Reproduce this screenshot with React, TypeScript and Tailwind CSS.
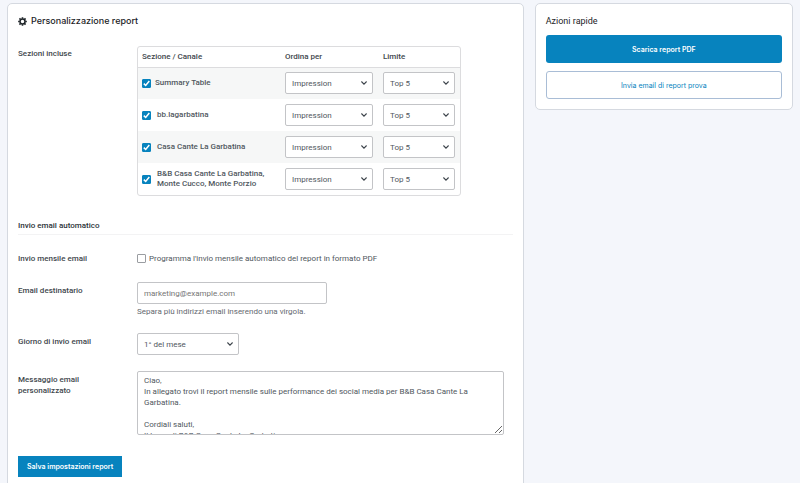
import { useState } from 'react';

interface Section {
    id: string;
    label: string;
}

const sections: Section[] = [
    { id: 'summary', label: 'Summary Table' },
    { id: 'bb-lagarbatina', label: 'bb.lagarbatina' },
    { id: 'casa-cante', label: 'Casa Cante La Garbatina' },
    { id: 'bb-casa-cante', label: 'B&B Casa Cante La Garbatina, Monte Cucco, Monte Porzio' },
];

const defaultMessage = `Ciao,
In allegato trovi il report mensile sulle performance dei social media per B&B Casa Cante La Garbatina.

Cordiali saluti,
Il team di B&B Casa Cante La Garbatina`;

function GearIcon() {
    return (
        <svg className="size-[9px] shrink-0" viewBox="0 0 20 20" fill="none" stroke="currentColor" aria-hidden="true">
            <circle cx="10" cy="10" r="5.6" strokeWidth="3.4" />
            <path
                strokeWidth="3.6"
                d="M10 .4v3.4M10 16.2v3.4M.4 10h3.4M16.2 10h3.4M3.2 3.2l2.4 2.4M14.4 14.4l2.4 2.4M3.2 16.8l2.4-2.4M14.4 5.6l2.4-2.4"
            />
        </svg>
    );
}

function Checkbox({ id, defaultChecked }: { id: string; defaultChecked?: boolean }) {
    return (
        <span className="grid size-[9px] shrink-0">
            <input
                id={id}
                type="checkbox"
                defaultChecked={defaultChecked}
                className="peer col-start-1 row-start-1 size-[9px] appearance-none rounded-[1px] border border-[#9a9da1] bg-white checked:border-[#0783be] checked:bg-[#0783be]"
            />
            <svg
                className="pointer-events-none col-start-1 row-start-1 hidden size-[9px] text-white peer-checked:block"
                viewBox="0 0 9 9"
                fill="none"
                stroke="currentColor"
                strokeWidth="1.5"
                aria-hidden="true"
            >
                <path d="M1.8 4.6l1.9 1.9L7.3 2" />
            </svg>
        </span>
    );
}

interface SelectProps {
    id?: string;
    label?: string;
    options: string[];
    className: string;
}

function Select({ id, label, options, className }: SelectProps) {
    return (
        <div className={`grid items-center ${className}`}>
            <select
                id={id}
                aria-label={label}
                className="col-start-1 row-start-1 h-[22px] w-full appearance-none rounded-[2px] border border-[#c3c4c7] bg-white px-[6px] text-[8px] text-[#50575e]"
            >
                {options.map((option) => (
                    <option key={option}>{option}</option>
                ))}
            </select>
            <svg
                className="pointer-events-none col-start-1 row-start-1 mr-[6px] h-1 w-[6px] justify-self-end text-[#3c434a]"
                viewBox="0 0 6 4"
                fill="none"
                stroke="currentColor"
                strokeWidth="1.1"
                aria-hidden="true"
            >
                <path d="M.4 .5L3 3.1L5.6 .5" />
            </svg>
        </div>
    );
}

const labelClass = 'w-[119px] shrink-0 pr-6 text-[8px] leading-[11px] font-medium text-[#41474d]';

export default function App() {
    const [message, setMessage] = useState(defaultMessage);

    return (
        <div className="min-h-screen bg-[#f4f6fb] font-['Roboto','Inter',sans-serif] text-[8px] leading-[11px] text-[#50575e]">
            <div className="grid grid-cols-[2fr_1fr] items-start gap-[11px] px-[7px] pt-[3px]">
                <main className="min-h-screen rounded-[5px] border border-[#d5d9e0] bg-white px-[10px] pt-[11px] pb-4">
                    <h1 className="flex items-center gap-1 font-['Inter',sans-serif] text-[9px] leading-3 font-medium text-[#1d2327]">
                        <GearIcon />
                        Personalizzazione report
                    </h1>

                    <div className="mt-[19px] flex items-start">
                        <h2 className={`${labelClass} pt-[2px]`}>Sezioni incluse</h2>
                        <div className="w-[324px] rounded-[3px] border border-[#dcdcde]">
                            <table className="w-full table-fixed text-left">
                                <thead>
                                    <tr className="h-5 border-b border-[#dcdcde] text-[#41474d]">
                                        <th scope="col" className="w-[142px] pl-1 font-medium">Sezione / Canale</th>
                                        <th scope="col" className="w-[98px] pl-[5px] font-medium">Ordina per</th>
                                        <th scope="col" className="pl-[5px] font-medium">Limite</th>
                                    </tr>
                                </thead>
                                <tbody>
                                    {sections.map((section, index) => (
                                        <tr key={section.id} className="h-8 odd:bg-[#f6f7f7]">
                                            <td className="pl-1">
                                                <div className={`flex items-center ${index === 0 ? 'gap-1' : 'gap-[6px]'}`}>
                                                    <Checkbox id={section.id} defaultChecked />
                                                    <label htmlFor={section.id} className="leading-[10px] font-medium">
                                                        {section.label}
                                                    </label>
                                                </div>
                                            </td>
                                            <td className="px-[5px]">
                                                <Select
                                                    label={`Ordina per: ${section.label}`}
                                                    options={['Impression', 'Engagement']}
                                                    className="w-full"
                                                />
                                            </td>
                                            <td className="px-[5px]">
                                                <Select
                                                    label={`Limite: ${section.label}`}
                                                    options={['Top 5', 'Top 10']}
                                                    className="w-full"
                                                />
                                            </td>
                                        </tr>
                                    ))}
                                </tbody>
                            </table>
                        </div>
                    </div>

                    <h2 className="mt-6 border-b border-[#f3f3f4] pb-[3px] text-[8px] leading-[11px] font-medium text-[#2c3338]">
                        Invio email automatico
                    </h2>

                    <div className="mt-[18px] flex items-center">
                        <label htmlFor="monthly" className={labelClass}>Invio mensile email</label>
                        <Checkbox id="monthly" />
                        <label htmlFor="monthly" className="pl-[3px]">
                            Programma l'invio mensile automatico del report in formato PDF
                        </label>
                    </div>

                    <div className="mt-[18px] flex items-start">
                        <label htmlFor="recipient" className={`${labelClass} pt-[3px]`}>Email destinatario</label>
                        <div>
                            <input
                                id="recipient"
                                type="email"
                                placeholder="marketing@example.com"
                                className="block h-[22px] w-[190px] rounded-[2px] border border-[#c3c4c7] px-[6px] placeholder:text-[#757575]"
                            />
                            <p className="mt-[2px] text-[#646970]">Separa più indirizzi email inserendo una virgola.</p>
                        </div>
                    </div>

                    <div className="mt-4 flex items-start">
                        <label htmlFor="day" className={`${labelClass} pt-[3px]`}>Giorno di invio email</label>
                        <Select id="day" options={['1° del mese', '15° del mese']} className="w-[102px]" />
                    </div>

                    <div className="mt-4 flex items-start">
                        <label htmlFor="message" className={`${labelClass} pt-[3px]`}>Messaggio email personalizzato</label>
                        <textarea
                            id="message"
                            value={message}
                            onChange={(e) => setMessage(e.target.value)}
                            className="block h-16 w-[367px] resize overflow-hidden rounded-[2px] border border-[#c3c4c7] px-[6px] py-[3px]"
                        />
                    </div>

                    <button type="button" className="mt-[21px] h-[21px] bg-[#0783be] px-[9px] font-['Inter',sans-serif] text-[7px] font-semibold text-white">
                        Salva impostazioni report
                    </button>
                </main>

                <aside className="rounded-[5px] border border-[#d5d9e0] bg-white px-[10px] pt-[11px] pb-[10px]">
                    <h2 className="text-[9px] leading-3 font-normal text-[#1d2327]">Azioni rapide</h2>
                    <div className="mt-2 flex flex-col gap-2 font-['Inter',sans-serif] text-[7px]">
                        <button type="button" className="h-7 rounded-[3px] bg-[#0783be] font-semibold text-white">
                            Scarica report PDF
                        </button>
                        <button type="button" className="h-7 rounded-[3px] border border-[#a9bdd6] bg-white font-normal text-[#0783be]">
                            Invia email di report prova
                        </button>
                    </div>
                </aside>
            </div>
        </div>
    );
}
